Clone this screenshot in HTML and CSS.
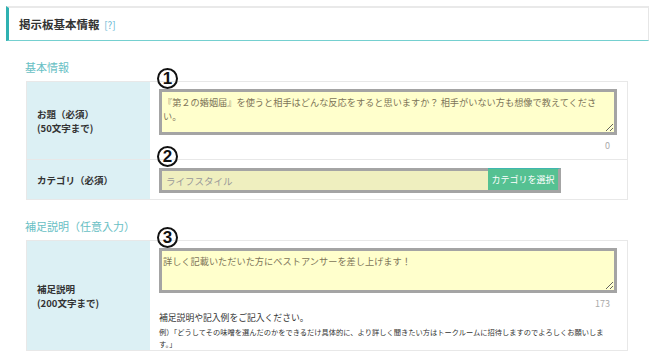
FILE: index.html
```html
<!DOCTYPE html>
<html lang="ja">
<head>
    <meta charset="UTF-8">
    <title>掲示板基本情報</title>
    <link rel="stylesheet" href="styles.css">
</head>
<body>
    <div class="panel-head">
        <h2>掲示板基本情報 <a class="help" href="#">[?]</a></h2>
    </div>

    <!-- 基本情報 -->
    <section class="block">
        <h3 class="block-title">基本情報</h3>
        <div class="form-table">
            <div class="form-row row-title">
                <div class="form-label">お題（必須）<br>(50文字まで)</div>
                <div class="form-field">
                    <span class="mark">1</span>
                    <textarea class="text-box title-box">『第２の婚姻届』を使うと相手はどんな反応をすると思いますか？ 相手がいない方も想像で教えてください。</textarea>
                    <div class="count">0</div>
                </div>
            </div>
            <div class="form-row row-cat">
                <div class="form-label">カテゴリ（必須）</div>
                <div class="form-field">
                    <span class="mark">2</span>
                    <div class="cat-group">
                        <input class="cat-input" type="text" value="ライフスタイル" readonly>
                        <button class="cat-btn">カテゴリを選択</button>
                    </div>
                </div>
            </div>
        </div>
    </section>

    <!-- 補足説明 -->
    <section class="block">
        <h3 class="block-title">補足説明（任意入力）</h3>
        <div class="form-table">
            <div class="form-row row-note">
                <div class="form-label">補足説明<br>(200文字まで)</div>
                <div class="form-field">
                    <span class="mark">3</span>
                    <textarea class="text-box note-box">詳しく記載いただいた方にベストアンサーを差し上げます！</textarea>
                    <div class="count">173</div>
                    <p class="hint">補足説明や記入例をご記入ください。</p>
                    <p class="example">例）「どうしてその味噌を選んだのかをできるだけ具体的に、より詳しく聞きたい方はトークルームに招待しますのでよろしくお願いします。」</p>
                </div>
            </div>
        </div>
    </section>
</body>
</html>
```

FILE: styles.css
```css
* {
    margin: 0;
    padding: 0;
    box-sizing: border-box;
}

body {
    font-family: "Noto Sans CJK JP", "Noto Sans", sans-serif;
    background: #fff;
    color: #333;
    padding: 6px 4px 0 6px;
}

/* 見出しバー */
.panel-head {
    height: 35px;
    border-top: 2px solid #e9e9e9;
    border-right: 1px solid #e6e6e6;
    border-left: 3px solid #2fb1b1;
    border-bottom: 1px solid #75d0d0;
    display: flex;
    align-items: center;
    padding-left: 10px;
}

.panel-head h2 {
    font-size: 11.5px;
    font-weight: bold;
    color: #333;
}

.help {
    font-size: 10px;
    font-weight: normal;
    color: #6bb8d4;
    text-decoration: none;
    margin-left: 2px;
}

.block {
    padding-top: 18px;
}

.block-title {
    font-size: 11px;
    font-weight: normal;
    line-height: 16px;
    color: #68c0c4;
    margin: 0 0 6px 19px;
}

/* フォームテーブル */
.form-table {
    margin-left: 20px;
    width: 602px;
    border: 1px solid #e8e8e8;
    border-bottom: none;
}

.form-row {
    display: grid;
    grid-template-columns: 123px 1fr;
    border-bottom: 1px solid #e8e8e8;
}

.form-label {
    background: #dcf0f4;
    display: flex;
    align-items: center;
    padding-left: 10px;
    font-size: 9.5px;
    font-weight: bold;
    line-height: 14px;
    color: #333;
}

.form-field {
    position: relative;
    padding: 7px 10px 0 9px;
}

/* 丸数字（注記） */
.mark {
    position: absolute;
    left: 7px;
    top: -14px;
    width: 21px;
    height: 21px;
    border: 2px solid #111;
    border-radius: 50%;
    display: flex;
    align-items: center;
    justify-content: center;
    font-family: "Liberation Sans", Arial, sans-serif;
    font-size: 17px;
    font-weight: bold;
    line-height: 1;
    color: #111;
    background: transparent;
}

.text-box {
    display: block;
    width: 100%;
    border: 3px solid #a4a4a4;
    background: #ffffcc;
    font-family: "Noto Sans CJK JP", sans-serif;
    font-size: 9.2px;
    line-height: 14px;
    color: #7d7458;
    padding: 3px 12px 2px 1px;
    resize: vertical;
    overflow: hidden;
}

.title-box {
    height: 46px;
}

.note-box {
    height: 45px;
}

.count {
    text-align: right;
    padding-right: 7px;
    font-size: 9px;
    color: #aaa;
    line-height: 14px;
    margin-top: 4px;
}

.row-title .form-field {
    padding-bottom: 6px;
}

.row-cat .form-field {
    padding-top: 8px;
    padding-bottom: 6px;
}

.cat-group {
    display: flex;
    width: 402px;
    height: 25px;
}

.cat-input {
    width: 329px;
    border: 3px solid #a4a4a4;
    border-right: none;
    background: #efefbf;
    font-family: "Noto Sans CJK JP", sans-serif;
    font-size: 9.5px;
    color: #999;
    padding-left: 4px;
    outline: none;
}

.cat-btn {
    flex: 1;
    background: #55c192;
    color: #fff;
    border: 3px solid #a4a4a4;
    border-left: none;
    border-top: 1px solid #3fb6b0;
    font-family: "Noto Sans CJK JP", sans-serif;
    font-size: 9px;
    cursor: pointer;
}

.hint {
    font-size: 8.8px;
    line-height: 12px;
    color: #333;
    margin-top: 1px;
}

.example {
    font-size: 7.25px;
    line-height: 12px;
    color: #333;
    margin-top: 2px;
}
```
